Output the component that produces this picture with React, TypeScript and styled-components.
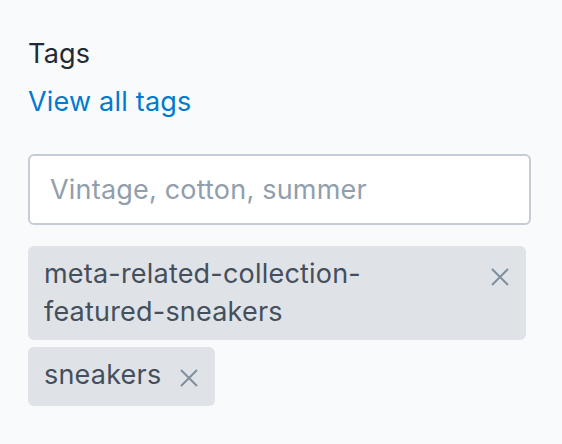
import React from 'react';
import styled, { createGlobalStyle } from 'styled-components';

const GlobalStyle = createGlobalStyle`
  html, body {
    margin: 0;
    padding: 0;
    background: #f9fafb;
  }
  body {
    font-family: Inter, "Noto Sans", "Liberation Sans", sans-serif;
    letter-spacing: 0.2px;
    -webkit-font-smoothing: antialiased;
  }
`;

const Section = styled.div`
  padding: 35px 31px 20px 28px;
  display: flex;
  flex-direction: column;
`;

const Heading = styled.div`
  font-size: 27px;
  line-height: 38px;
  color: #212b36;
`;

const ViewLink = styled.a`
  margin-top: 10px;
  font-size: 27px;
  line-height: 38px;
  color: #007ace;
  text-decoration: none;
  align-self: flex-start;
  cursor: pointer;
`;

const Input = styled.input`
  margin-top: 33px;
  box-sizing: border-box;
  height: 71px;
  width: 100%;
  border: 2px solid #c4cdd5;
  border-radius: 6px;
  background: #ffffff;
  padding: 0 20px;
  font-family: inherit;
  font-size: 27px;
  letter-spacing: inherit;
  color: #212b36;
  outline: none;

  &::placeholder {
    color: #919eab;
  }
`;

const TagList = styled.div`
  margin-top: 21px;
  display: flex;
  flex-direction: column;
  align-items: flex-start;
  gap: 7px;
  max-width: 498px;
`;

const Tag = styled.div`
  box-sizing: border-box;
  display: flex;
  align-items: flex-start;
  max-width: 100%;
  padding: 9px 17px 9px 16px;
  border-radius: 6px;
  background: #dfe3e8;
  color: #454f5b;
  font-size: 27px;
  line-height: 38px;
`;

const TagLabel = styled.span`
  flex: 1 1 auto;
  min-width: 0;
`;

const RemoveButton = styled.button`
  flex: none;
  display: flex;
  align-items: center;
  justify-content: center;
  margin: 3px 0 0 19px;
  padding: 0;
  width: 18px;
  height: 38px;
  border: none;
  background: transparent;
  color: #7f8f9e;
  cursor: pointer;
`;

const CloseIcon = () => (
  <svg width="18" height="18" viewBox="0 0 18 18" fill="none">
    <path d="M1 1L17 17M17 1L1 17" stroke="currentColor" strokeWidth="2" />
  </svg>
);

const tags = ['meta-related-collection-featured-sneakers', 'sneakers'];

const App: React.FC = () => {
  return (
    <>
      <GlobalStyle />
      <Section>
        <Heading>Tags</Heading>
        <ViewLink>View all tags</ViewLink>
        <Input placeholder="Vintage, cotton, summer" />
        <TagList>
          {tags.map(tag => (
            <Tag key={tag}>
              <TagLabel>{tag}</TagLabel>
              <RemoveButton aria-label={`Remove ${tag}`}>
                <CloseIcon />
              </RemoveButton>
            </Tag>
          ))}
        </TagList>
      </Section>
    </>
  );
};

export default App;
